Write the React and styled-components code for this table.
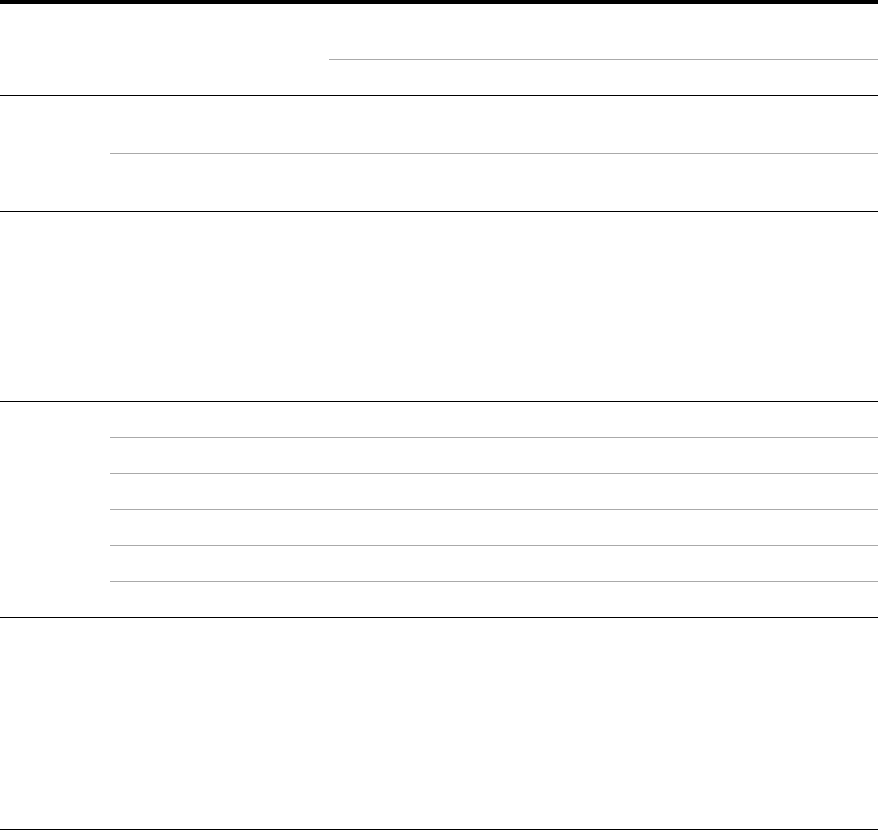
import React from "react";
import styled, { createGlobalStyle } from "styled-components";

const GlobalStyle = createGlobalStyle`
    html, body {
        margin: 0;
        padding: 0;
        background: #fff;
        font-family: "Liberation Sans", Arial, sans-serif;
    }
`;

const Sheet = styled.div`
    width: 878px;
    border-top: 4px solid #000;
`;

// one block of rows, closed by a black rule
const Group = styled.div`
    display: grid;
    grid-template-columns: ${(p) => p.$lead}px 1fr;
    border-bottom: 1px solid #000;
`;

const LeadCell = styled.div`
    min-height: 1px;
`;

const Stack = styled.div`
    display: flex;
    flex-direction: column;
`;

const Cell = styled.div`
    height: ${(p) => p.$h}px;
    border-bottom: ${(p) => (p.$rule ? "1px solid #aaa" : "none")};
`;

function Block({ lead, rows }) {
    return (
        <Group $lead={lead}>
            <LeadCell />
            <Stack>
                {rows.map((h, i) => (
                    <Cell key={i} $h={h} $rule={i < rows.length - 1} />
                ))}
            </Stack>
        </Group>
    );
}

export default function App() {
    return (
        <>
            <GlobalStyle />
            <Sheet>
                <Block lead={329} rows={[55, 35]} />
                <Block lead={110} rows={[57, 57]} />
                <Block lead={110} rows={[189]} />
                <Block lead={110} rows={[35, 35, 35, 35, 35, 35]} />
                <Block lead={110} rows={[211]} />
            </Sheet>
        </>
    );
}
